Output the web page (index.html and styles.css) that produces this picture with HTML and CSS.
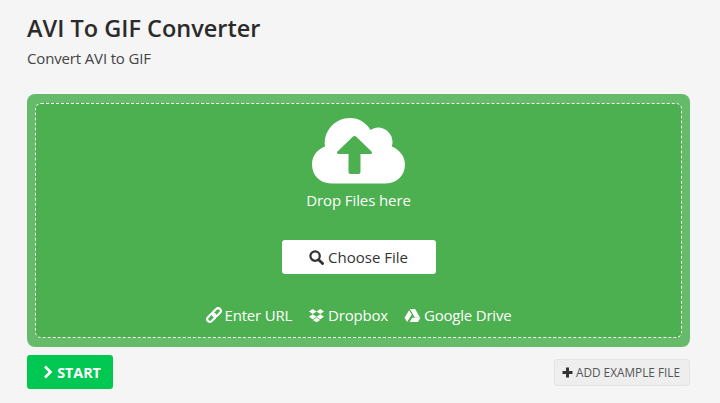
FILE: index.html
```html
<!DOCTYPE html>
<html lang="en">
  <head>
    <meta charset="UTF-8" />
    <meta name="viewport" content="width=device-width, initial-scale=1.0" />
    <title>AVI To GIF Converter</title>
    <link rel="stylesheet" href="styles.css">
  </head>
  <body>
    <h1>AVI To GIF Converter</h1>
    <p class="subtitle">Convert AVI to GIF</p>

    <!-- Upload Box -->
    <div class="upload">
      <div class="dropzone">
        <svg class="cloud" viewBox="0 0 93 66" aria-hidden="true">
          <path fill="#fff" d="M19 65.500C8 65.500 0 57 0 46.500C0 38 5 31.500 13 28.500C11 13 23 0 38 0C47 0 54 4.500 58.500 12C61 10.500 63.500 9.500 66 9.500C74 9.500 80.500 16 80.500 24C80.500 25.500 80.300 27 79.800 28.500C87.500 31.500 93 38.500 93 46.500C93 57 85 65.500 74 65.500Z" />
          <path fill="#4caf50" d="M41 18.500Q42.500 17.500 44 18.500L59.500 33.500Q61 36 58 36H48.500V54Q48.500 56 46.500 56H38.500Q36.500 56 36.500 54V36H27Q24 36 25.500 33.500Z" />
        </svg>
        <div class="drop-text">Drop Files here</div>

        <button class="choose">
          <svg class="icon-search" viewBox="0 0 16 16" aria-hidden="true">
            <circle cx="6.500" cy="6.500" r="5" fill="none" stroke="#333" stroke-width="2.400" />
            <path d="M10.300 10.300L14.500 14.500" stroke="#333" stroke-width="3" stroke-linecap="round" />
          </svg>
          Choose File
        </button>

        <div class="sources">
          <span class="source">
            <svg class="icon" viewBox="0 0 16 16" aria-hidden="true">
              <g transform="rotate(-45 8 8)" fill="none" stroke="#fff" stroke-width="2.200">
                <rect x="-0.500" y="5.300" width="9.500" height="5.400" rx="2.700" />
                <rect x="7" y="5.300" width="9.500" height="5.400" rx="2.700" />
              </g>
            </svg>
            Enter URL
          </span>
          <span class="source">
            <svg class="icon-wide" viewBox="0 0 18 16" aria-hidden="true">
              <path fill="#fff" d="M5 1L9 3.700L5 6.400L1 3.700ZM13 1L17 3.700L13 6.400L9 3.700ZM5 6.600L9 9.300L5 12L1 9.300ZM13 6.600L17 9.300L13 12L9 9.300ZM5 12.800L9 10L13 12.800L9 15.300Z" />
            </svg>
            Dropbox
          </span>
          <span class="source">
            <svg class="icon-wide" viewBox="0 0 18 16" aria-hidden="true">
              <path fill="#fff" d="M6.200 1H11.800L17 10H11.500ZM5.400 2.300L8.200 7L3.200 15L0.500 10.500ZM8.800 10.500H17.500L14.800 15H5.800Z" />
            </svg>
            Google Drive
          </span>
        </div>
      </div>
    </div>

    <div class="actions">
      <button class="start">
        <svg class="icon-chevron" viewBox="0 0 10 14" aria-hidden="true">
          <path fill="none" stroke="#fff" stroke-width="2.600" d="M2 1.500L7.500 7L2 12.500" />
        </svg>
        START
      </button>
      <button class="example">
        <svg class="icon-plus" viewBox="0 0 11 11" aria-hidden="true">
          <path fill="#333" d="M4 0.500H7V4H10.500V7H7V10.500H4V7H0.500V4H4Z" />
        </svg>
        ADD EXAMPLE FILE
      </button>
    </div>
  </body>
</html>
```

FILE: styles.css
```css
* {
  margin: 0;
  padding: 0;
  box-sizing: border-box;
}

body,
html {
  height: 100%;
  overflow: hidden;
}

body {
  background-color: #f5f5f5;
  font-family: "Open Sans", sans-serif;
  color: #333;
  padding: 12px 30px 0 27px;
}

h1 {
  font-size: 23.500px;
  line-height: 32px;
  font-weight: 600;
  color: #2b2b2b;
}

.subtitle {
  margin-top: 4px;
  font-size: 15px;
  line-height: 20px;
  letter-spacing: -0.150px;
  color: #444;
}

.upload {
  margin-top: 26px;
  height: 253px;
  padding: 9px 8px 9px 8px;
  background-color: #66bb6a;
  border-radius: 8px;
}

.dropzone {
  height: 100%;
  padding-top: 14px;
  display: flex;
  flex-direction: column;
  align-items: center;
  background-color: #4caf50;
  border: 1px dashed #fff;
  border-radius: 6px;
  color: #fff;
}

.cloud {
  display: block;
  width: 93px;
  height: 66px;
}

.drop-text {
  margin-top: 6px;
  font-size: 15px;
  line-height: 20px;
  letter-spacing: -0.100px;
}

.choose {
  margin-top: 30px;
  width: 154px;
  height: 34px;
  display: flex;
  align-items: center;
  justify-content: center;
  gap: 4px;
  background-color: #fff;
  border: none;
  border-radius: 3px;
  font-family: inherit;
  font-size: 15px;
  font-weight: 500;
  color: #333;
}

.icon-search {
  width: 15px;
  height: 15px;
}

.sources {
  margin-top: 31px;
  display: flex;
  gap: 16px;
  font-size: 15px;
  line-height: 20px;
  letter-spacing: -0.200px;
}

.source {
  display: flex;
  align-items: center;
  gap: 3px;
}

.icon {
  width: 16px;
  height: 16px;
}

.icon-wide {
  width: 17px;
  height: 15px;
}

.actions {
  margin-top: 8px;
  display: flex;
  justify-content: space-between;
  align-items: center;
}

.start {
  width: 86px;
  height: 34px;
  padding-left: 4px;
  display: flex;
  align-items: center;
  justify-content: center;
  gap: 4px;
  background-color: #00c853;
  border: none;
  border-radius: 3px;
  font-family: inherit;
  font-size: 14.300px;
  font-weight: 700;
  color: #fff;
}

.icon-chevron {
  width: 10px;
  height: 14px;
}

.example {
  width: 136px;
  height: 27px;
  padding-right: 2px;
  display: flex;
  align-items: center;
  justify-content: center;
  gap: 3px;
  background-color: #eee;
  border: 1px solid #e4e4e4;
  border-radius: 3px;
  font-family: inherit;
  font-size: 11.800px;
  color: #555;
}

.icon-plus {
  width: 11px;
  height: 11px;
}
```
